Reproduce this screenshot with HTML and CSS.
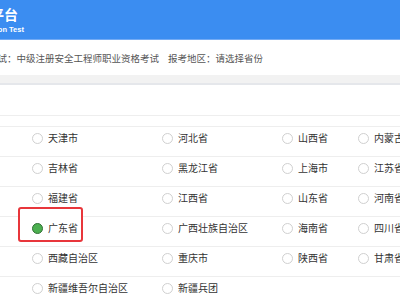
FILE: index.html
```html
<!DOCTYPE html>
<html lang="zh-CN">

<head>
    <meta charset="UTF-8" />
    <title>选择报考地区</title>
    <link rel="stylesheet" href="styles.css">
</head>

<body>
    <header class="topbar">
        <div class="brand">
            <div class="brand-name">在线考试平台</div>
            <div class="brand-sub">Online Examination Test</div>
        </div>
    </header>

    <div class="exam-info">
        <span>报考考试：中级注册安全工程师职业资格考试</span>
        <span>报考地区：请选择省份</span>
    </div>
    <div class="divider"></div>

    <section class="region-panel">
        <div class="panel-head"></div>
        <div class="region-grid">
            <div class="region-row">
                <label class="region"><input type="radio" name="region" /><span>天津市</span></label>
                <label class="region"><input type="radio" name="region" /><span>河北省</span></label>
                <label class="region"><input type="radio" name="region" /><span>山西省</span></label>
                <label class="region"><input type="radio" name="region" /><span>内蒙古自治区</span></label>
            </div>
            <div class="region-row">
                <label class="region"><input type="radio" name="region" /><span>吉林省</span></label>
                <label class="region"><input type="radio" name="region" /><span>黑龙江省</span></label>
                <label class="region"><input type="radio" name="region" /><span>上海市</span></label>
                <label class="region"><input type="radio" name="region" /><span>江苏省</span></label>
            </div>
            <div class="region-row">
                <label class="region"><input type="radio" name="region" /><span>福建省</span></label>
                <label class="region"><input type="radio" name="region" /><span>江西省</span></label>
                <label class="region"><input type="radio" name="region" /><span>山东省</span></label>
                <label class="region"><input type="radio" name="region" /><span>河南省</span></label>
            </div>
            <div class="region-row">
                <label class="region is-picked"><input type="radio" name="region" checked /><span>广东省</span></label>
                <label class="region"><input type="radio" name="region" /><span>广西壮族自治区</span></label>
                <label class="region"><input type="radio" name="region" /><span>海南省</span></label>
                <label class="region"><input type="radio" name="region" /><span>四川省</span></label>
            </div>
            <div class="region-row">
                <label class="region"><input type="radio" name="region" /><span>西藏自治区</span></label>
                <label class="region"><input type="radio" name="region" /><span>重庆市</span></label>
                <label class="region"><input type="radio" name="region" /><span>陕西省</span></label>
                <label class="region"><input type="radio" name="region" /><span>甘肃省</span></label>
            </div>
            <div class="region-row">
                <label class="region"><input type="radio" name="region" /><span>新疆维吾尔自治区</span></label>
                <label class="region"><input type="radio" name="region" /><span>新疆兵团</span></label>
            </div>
        </div>
    </section>
</body>

</html>
```

FILE: styles.css
```css
body {
    margin: 0;
    background: #fff;
    font-family: "Noto Sans CJK SC", "Liberation Sans", sans-serif;
    overflow: hidden;
}

.topbar {
    height: 40px;
    box-sizing: border-box;
    padding-top: 5px;
    background-color: #3b8df1;
    border-bottom: 1px solid #74abf4;
    color: #fff;
}

.brand {
    margin-left: -66px;
}

.brand-name {
    font-size: 14px;
    font-weight: bold;
    line-height: 19px;
}

.brand-sub {
    margin: 1px 0 0 3px;
    font-family: "Liberation Sans", sans-serif;
    font-size: 7.5px;
    font-weight: bold;
    line-height: 9px;
}

.exam-info {
    height: 35px;
    display: flex;
    align-items: center;
    gap: 9px;
    margin-left: -31px;
    font-size: 9.5px;
    color: #555;
    white-space: nowrap;
}

.divider {
    height: 8px;
    background-color: #f2f2f2;
    border-bottom: 2px solid #e5e7eb;
}

.panel-head {
    height: 30px;
    border-bottom: 1px solid #eee;
}

.region-grid {
    margin-top: 10px;
    border-top: 1px solid #eee;
}

.region-row {
    display: grid;
    grid-template-columns: 130px 120px 76px 120px;
    height: 24px;
    padding: 5px 0 0 32px;
    border-bottom: 1px solid #eee;
}

.region {
    justify-self: start;
    display: flex;
    align-items: center;
    gap: 5px;
    height: 12px;
    font-size: 10px;
    line-height: 12px;
    color: #333;
    white-space: nowrap;
}

.region input {
    appearance: none;
    -webkit-appearance: none;
    flex: none;
    margin: 0;
    width: 11px;
    height: 11px;
    box-sizing: border-box;
    border: 1px solid #d0d0d0;
    border-radius: 50%;
    background: #fff;
}

.region input:checked {
    background-color: #4caf50;
    border-color: #2f6f33;
}

.is-picked {
    position: relative;
    z-index: 0;
}

.is-picked::before {
    content: "";
    position: absolute;
    left: -14px;
    right: -5px;
    top: -15px;
    bottom: -8px;
    border: 2px solid #e8363b;
    border-radius: 3px;
    background: #fff;
    z-index: -1;
}
```
